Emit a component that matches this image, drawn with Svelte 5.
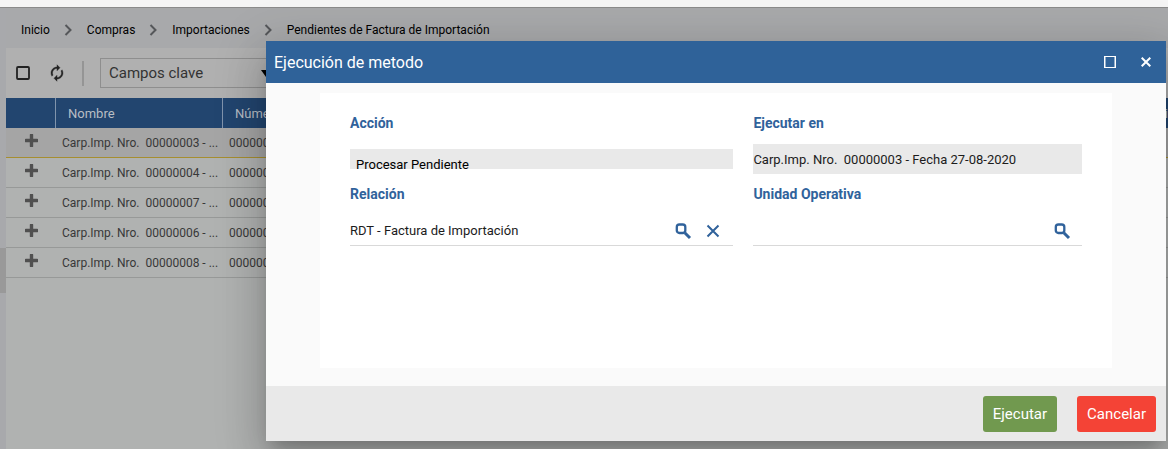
<script>
  const crumbs = ['Inicio', 'Compras', 'Importaciones', 'Pendientes de Factura de Importación'];
  const rows = ['00000003', '00000004', '00000007', '00000006', '00000008'];
  let action = $state('Procesar Pendiente');
  let target = $state('Carp.Imp. Nro.\u00a0 00000003 - Fecha 27-08-2020');
  let relation = $state('RDT - Factura de Importación');
  let unit = $state('');
</script>

{#snippet search()}
  <svg width="18" height="18" viewBox="0 0 18 18" fill="none" stroke="currentColor" aria-hidden="true">
    <rect x="2.800" y="2.500" width="8.500" height="8.500" rx="2.600" stroke-width="2.300" />
    <path d="M11 11l5 5" stroke-width="3" />
  </svg>
{/snippet}

<div class="page">
  <div class="strip"></div>
  <div class="body">
    <aside><span class="thumb"></span></aside>
    <main>
      <nav>
        {#each crumbs as crumb, i}
          {#if i}
            <svg width="9" height="12" viewBox="0 0 9 12" aria-hidden="true"><path d="M1.500 1l5 5-5 5" fill="none" stroke="#55575a" stroke-width="2" /></svg>
          {/if}
          <a href="#top">{crumb}</a>
        {/each}
      </nav>
      <div class="toolbar">
        <button class="tool" aria-label="Seleccionar">
          <svg width="14" height="14" viewBox="0 0 14 14"><rect x="1" y="1" width="12" height="12" rx="1" fill="none" stroke="currentColor" stroke-width="1.800" /></svg>
        </button>
        <button class="tool" aria-label="Actualizar">
          <svg width="14" height="18" viewBox="3 0 18 24"><path d="M12 6v3l4-4-4-4v3c-4.420 0-8 3.580-8 8 0 1.570.46 3.030 1.240 4.260L6.700 14.800c-.45-.83-.7-1.790-.7-2.800 0-3.310 2.690-6 6-6zm6.760 1.740L17.300 9.200c.44.84.7 1.790.7 2.800 0 3.310-2.690 6-6 6v-3l-4 4 4 4v-3c4.420 0 8-3.580 8-8 0-1.570-.46-3.030-1.240-4.260z" fill="currentColor" stroke="currentColor" stroke-width=".5" /></svg>
        </button>
        <span class="rule"></span>
        <div class="picker">
          <select aria-label="Campos">
            <option>Campos clave</option>
          </select>
          <svg class="arrow" width="10" height="7" viewBox="0 0 10 7" aria-hidden="true"><path d="M0 0h10L5 7z" /></svg>
        </div>
      </div>
      <table>
        <colgroup><col class="c-add" /><col class="c-name" /><col /><col class="c-last" /></colgroup>
        <thead>
          <tr><th></th><th>Nombre</th><th>Número</th><th class="last">i</th></tr>
        </thead>
        <tbody>
          {#each rows as row, i}
            <tr class:selected={i === 0}>
              <td class="add">
                <button aria-label="Expandir">
                  <svg width="13" height="13" viewBox="0 0 13 13"><path d="M6.500 1v11M1 6.500h11" stroke="currentColor" stroke-width="3.400" stroke-linecap="round" /></svg>
                </button>
              </td>
              <td>Carp.Imp. Nro.&nbsp; {row} - ...</td>
              <td>{row}</td>
              <td></td>
            </tr>
          {/each}
        </tbody>
      </table>
    </main>
  </div>

  <div class="overlay">
    <div class="dialog" role="dialog" aria-labelledby="title">
      <header>
        <h1 id="title">Ejecución de metodo</h1>
        <button aria-label="Maximizar">
          <svg width="14" height="12" viewBox="0 0 14 12"><path d="M1 .5h12M1 11.500h12" stroke="#fff" /><path d="M1.750 0v12M12.250 0v12" stroke="#fff" stroke-width="1.500" /></svg>
        </button>
        <button aria-label="Cerrar">
          <svg width="10" height="10" viewBox="0 0 10 10"><path d="M.7.7l8.600 8.600M9.300.7L.7 9.300" stroke="#fff" stroke-width="2" /></svg>
        </button>
      </header>
      <div class="content">
        <form id="run" class="card" onsubmit={(e) => e.preventDefault()}>
          <div class="field">
            <label for="action">Acción</label>
            <div class="box"><input id="action" class="short" readonly bind:value={action} /></div>
          </div>
          <div class="field">
            <label for="target">Ejecutar en</label>
            <div class="box"><input id="target" class="filled" readonly bind:value={target} /></div>
          </div>
          <div class="field">
            <label for="relation">Relación</label>
            <div class="box line">
              <input id="relation" bind:value={relation} />
              <button type="button" aria-label="Buscar relación">{@render search()}</button>
              <button type="button" aria-label="Quitar relación">
                <svg width="18" height="18" viewBox="0 0 18 18"><path d="M3.500 3.500l11 11M14.500 3.500l-11 11" stroke="currentColor" stroke-width="2" /></svg>
              </button>
            </div>
          </div>
          <div class="field">
            <label for="unit">Unidad Operativa</label>
            <div class="box line">
              <input id="unit" bind:value={unit} />
              <button type="button" aria-label="Buscar unidad">{@render search()}</button>
            </div>
          </div>
        </form>
      </div>
      <footer>
        <button form="run" class="go">Ejecutar</button>
        <button class="cancel">Cancelar</button>
      </footer>
    </div>
  </div>
</div>

<style>
  :global(body) { margin: 0; }
  * { box-sizing: border-box; }
  .page {
    position: relative;
    display: flex;
    flex-direction: column;
    min-height: 100vh;
    overflow: hidden;
    background: #b0b2b1;
    font-family: Roboto, sans-serif;
    font-size: 12px;
    color: #000;
  }
  button, input, select { font: inherit; color: inherit; }
  button { display: flex; align-items: center; justify-content: center; padding: 0; border: 0; background: none; }
  .strip { height: 8px; background: #f5f5f5; border-bottom: 1px solid #8b8b8b; }
  .body { flex: 1; display: flex; }
  aside { width: 6px; padding-top: 240px; background: #a8a9ac; }
  .thumb { display: block; height: 45px; background: #999; }
  main { flex: 1; min-width: 0; }
  nav {
    display: flex;
    align-items: center;
    gap: 14px;
    height: 40px;
    padding: 4px 15px 0;
    background: #a8a9ab;
  }
  nav a { color: inherit; text-decoration: none; white-space: nowrap; }
  .toolbar { display: flex; align-items: center; height: 50px; padding-left: 10px; background: #b0b0b0; color: #222; }
  .tool { width: 14px; height: 24px; margin-right: 20px; }
  .rule { width: 2px; height: 25px; margin: 0 16px 0 -2px; background: #959595; }
  .picker { position: relative; width: 186px; }
  .arrow { position: absolute; top: 12px; right: 15px; pointer-events: none; }
  select {
    appearance: none;
    display: block;
    width: 100%;
    height: 30px;
    padding: 0 8px;
    border: 1px solid #8e8e8e;
    border-radius: 0;
    background: none;
    color: #333;
    font-size: 15px;
  }
  table { width: 100%; table-layout: fixed; border-collapse: separate; border-spacing: 0; }
  .c-add { width: 50px; }
  .c-name { width: 167px; }
  .c-last { width: 10px; }
  th {
    height: 30px;
    padding: 0 0 0 12px;
    border-right: 1px solid #8094ac;
    background: #22456f;
    color: #b8bdc4;
    font-size: 13px;
    font-weight: 400;
    text-align: left;
  }
  th.last { padding: 0; text-align: right; border: 0; }
  td { height: 30px; padding: 0 0 0 6px; border-bottom: 1px solid #979998; color: #383838; white-space: nowrap; overflow: hidden; }
  .selected td { background: #a5a5a5; border-color: #a68e30; }
  .add { padding: 0 0 4px 19px; }
  .add button { color: #505050; }
  .overlay { position: absolute; inset: 0; padding: 41px 2px 8px 266px; }
  .dialog { display: flex; flex-direction: column; height: 100%; background: #fafafa; box-shadow: 0 11px 15px -7px rgba(0,0,0,.2), 0 24px 38px 3px rgba(0,0,0,.14), 0 9px 46px 8px rgba(0,0,0,.12); }
  header { display: flex; align-items: center; gap: 12px; height: 42px; padding: 0 8px; background: #2f6299; color: #fff; }
  header button { width: 24px; height: 24px; }
  h1 { flex: 1; margin: 0; font-size: 16px; font-weight: 400; }
  .content { flex: 1; display: flex; padding: 10px 6% 18px; }
  .card {
    flex: 1;
    display: grid;
    grid-template-columns: 7fr 6fr;
    grid-auto-rows: min-content;
    gap: 0 20px;
    padding: 20px 30px;
    background: #fff;
  }
  .field { min-width: 0; height: 71px; }
  label { display: block; height: 30px; line-height: 20px; color: #30629b; font-size: 14px; font-weight: 700; }
  .box { display: flex; height: 32px; align-items: center; }
  .box input { flex: 1; min-width: 0; height: 30px; padding: 0; border: 0; outline: 0; background: none; color: #1c1c1c; font-size: 13px; }
  .box .short { height: 20px; padding: 10px 6px 0; background: #e9e9e9; color: #000; }
  .box .filled { background: #e9e9e9; }
  .line { gap: 12px; padding: 2px 11px 0 0; border-bottom: 1px solid #d9d9d9; color: #30629b; }
  .line button { width: 18px; height: 24px; }
  footer { display: flex; align-items: center; justify-content: flex-end; gap: 20px; height: 55px; padding: 0 10px; background: #e9e9e9; }
  footer button { height: 36px; padding: 0 10px; border-radius: 3px; color: #fff; font-size: 15px; }
  .go { background: #71994f; }
  .cancel { background: #f44336; }
</style>
